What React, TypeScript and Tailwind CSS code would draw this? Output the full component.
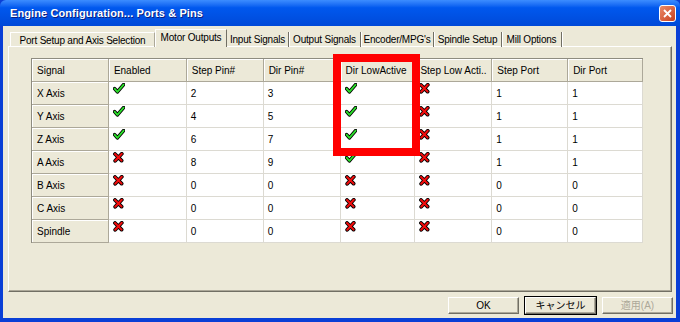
// Mach3-style "Engine Configuration... Ports & Pins" dialog, Motor Outputs tab,
// drawn as a Windows XP (Luna) window with the Dir LowActive column boxed in red.

type Cell = "on" | "off" | string;

const columns = [
  { label: "Signal", w: "w-[77px]" },
  { label: "Enabled", w: "w-[78px]" },
  { label: "Step Pin#", w: "w-[77px]" },
  { label: "Dir Pin#", w: "w-[77px]" },
  { label: "Dir LowActive", w: "w-[75px]" },
  { label: "Step Low Acti..", w: "w-[77px]" },
  { label: "Step Port", w: "w-[76px]" },
  { label: "Dir Port", w: "w-[75px]" },
];

const rows: { name: string; cells: Cell[] }[] = [
  { name: "X Axis", cells: ["on", "2", "3", "on", "off", "1", "1"] },
  { name: "Y Axis", cells: ["on", "4", "5", "on", "off", "1", "1"] },
  { name: "Z Axis", cells: ["on", "6", "7", "on", "off", "1", "1"] },
  { name: "A Axis", cells: ["off", "8", "9", "on", "off", "1", "1"] },
  { name: "B Axis", cells: ["off", "0", "0", "off", "off", "0", "0"] },
  { name: "C Axis", cells: ["off", "0", "0", "off", "off", "0", "0"] },
  { name: "Spindle", cells: ["off", "0", "0", "off", "off", "0", "0"] },
];

const tabs = [
  { label: "Port Setup and Axis Selection", w: "w-[145px]", kind: "first" },
  { label: "Motor Outputs", w: "w-[72px]", kind: "active" },
  { label: "Input Signals", w: "w-[62px]", kind: "plain" },
  { label: "Output Signals", w: "w-[72px]", kind: "plain" },
  { label: "Encoder/MPG's", w: "w-[73px]", kind: "plain" },
  { label: "Spindle Setup", w: "w-[68px]", kind: "plain" },
  { label: "Mill Options", w: "w-[60px]", kind: "plain" },
];

function Check() {
  return (
    <svg width="12" height="11" viewBox="0 0 12 11" aria-hidden="true">
      <path d="M1.6 5.6 L4.4 8.8 L10.6 1.6" fill="none" stroke="#000" strokeWidth="3.6" strokeLinecap="round" strokeLinejoin="round" />
      <path d="M1.6 5.6 L4.4 8.8 L10.6 1.6" fill="none" stroke="#2BE02B" strokeWidth="1.8" strokeLinecap="round" strokeLinejoin="round" />
    </svg>
  );
}

function Cross() {
  return (
    <svg width="11" height="11" viewBox="0 0 11 11" aria-hidden="true">
      <path d="M2 2 L8.6 8.6 M8.8 1.8 L2.2 8.8" fill="none" stroke="#000" strokeWidth="3.8" strokeLinecap="round" />
      <path d="M2 2 L8.6 8.6 M8.8 1.8 L2.2 8.8" fill="none" stroke="#F20C0C" strokeWidth="2" strokeLinecap="round" />
    </svg>
  );
}

function TitleBar() {
  return (
    <div className="flex h-[26px] items-center justify-between rounded-t-[6px] bg-linear-to-b from-[#3C8DFF] from-0% via-[#0058EE] via-30% to-[#0049D8] to-100% pl-[10px] pr-[4px]">
      <span className="text-[11px] font-bold tracking-[0.1px] text-white [text-shadow:1px_1px_0_#0A1E80]">
        Engine Configuration... Ports &amp; Pins
      </span>
      <div className="flex h-[17px] w-[17px] items-center justify-center rounded-[3px] border border-white bg-linear-to-br from-[#EA8A68] to-[#C83E1A]">
        <svg width="9" height="9" viewBox="0 0 9 9" aria-hidden="true">
          <path d="M1 1 L8 8 M8 1 L1 8" stroke="#fff" strokeWidth="1.8" />
        </svg>
      </div>
    </div>
  );
}

function Tabs() {
  return (
    <div className="relative z-10 -mb-px flex h-[18px] items-end pl-[7px]">
      {tabs.map((t) => {
        if (t.kind === "active")
          return (
            <div
              key={t.label}
              className={`${t.w} flex h-[18px] items-center justify-center border-l border-r border-t border-l-white border-t-white border-r-[#716F64] bg-[#ECE9D8] pb-[3px] text-[10px] tracking-[-0.2px] text-black`}
            >
              {t.label}
            </div>
          );
        if (t.kind === "first")
          return (
            <div
              key={t.label}
              className={`${t.w} flex h-[15px] items-center justify-center border-l border-r border-t border-l-white border-t-white border-r-[#ACA899] text-[10px] tracking-[-0.2px] text-black`}
            >
              {t.label}
            </div>
          );
        return (
          <div
            key={t.label}
            className={`${t.w} flex h-[15px] items-center justify-center border-r border-r-[#716F64] text-[10px] tracking-[-0.2px] text-black shadow-[1px_0_0_#fff]`}
          >
            {t.label}
          </div>
        );
      })}
    </div>
  );
}

function SignalTable() {
  const headCell =
    "flex h-[23px] items-center border-r border-b border-r-[#ACA899] border-b-[#ACA899] bg-[#ECE9D8] pl-[5px] shadow-[inset_1px_1px_0_#fff]";
  return (
    <div className="relative w-[612px] border-l border-t border-[#8E8C80]">
      <div className="flex">
        {columns.map((c) => (
          <div key={c.label} className={`${c.w} ${headCell} overflow-hidden whitespace-nowrap`}>
            {c.label}
          </div>
        ))}
      </div>
      {rows.map((r) => (
        <div key={r.name} className="flex">
          <div className={`${columns[0].w} ${headCell}`}>{r.name}</div>
          {r.cells.map((v, i) => (
            <div
              key={i}
              className={`${columns[i + 1].w} h-[23px] border-r border-b border-[#DCDAD2] bg-white pl-[4px] ${
                v === "on" || v === "off" ? "pt-px" : "flex items-center"
              }`}
            >
              {v === "on" ? <Check /> : v === "off" ? <Cross /> : v}
            </div>
          ))}
        </div>
      ))}
      {/* annotation box around the Dir LowActive column */}
      <div className="pointer-events-none absolute left-[301px] top-[-5px] h-[102px] w-[87px] border-[8px] border-[#FF0000]" />
    </div>
  );
}

function Btn({ label, main, disabled }: { label: string; main?: boolean; disabled?: boolean }) {
  return (
    <div className={main ? "border border-black" : "border border-transparent"}>
      <div
        className={`flex h-[17px] w-[71px] items-center justify-center border border-l-white border-t-white border-r-[#716F64] border-b-[#716F64] bg-[#ECE9D8] text-[10px] shadow-[inset_-1px_-1px_0_#ACA899] ${
          disabled ? "text-[#ACA899]" : "text-black"
        }`}
      >
        {label}
      </div>
    </div>
  );
}

export default function App() {
  return (
    <div
      className="flex h-[322px] w-[680px] flex-col bg-[#0A3FD6] text-[10px] text-black"
      style={{ fontFamily: '"Liberation Sans", "Noto Sans CJK JP", Arial, sans-serif' }}
    >
      <TitleBar />
      <div className="mb-[4px] ml-[3px] mr-[4px] flex flex-1 flex-col bg-[#ECE9D8] pt-[3px]">
        <Tabs />
        <div className="ml-[5px] mr-[4px] h-[246px] border border-l-white border-t-white border-r-[#716F64] border-b-[#716F64] pl-[22px] pt-[11px] shadow-[inset_-1px_-1px_0_#ACA899]">
          <SignalTable />
        </div>
        <div className="mt-[4px] flex justify-end gap-[4px] pr-[2px]">
          <Btn label="OK" />
          <Btn label="キャンセル" main />
          <Btn label="適用(A)" disabled />
        </div>
      </div>
    </div>
  );
}
